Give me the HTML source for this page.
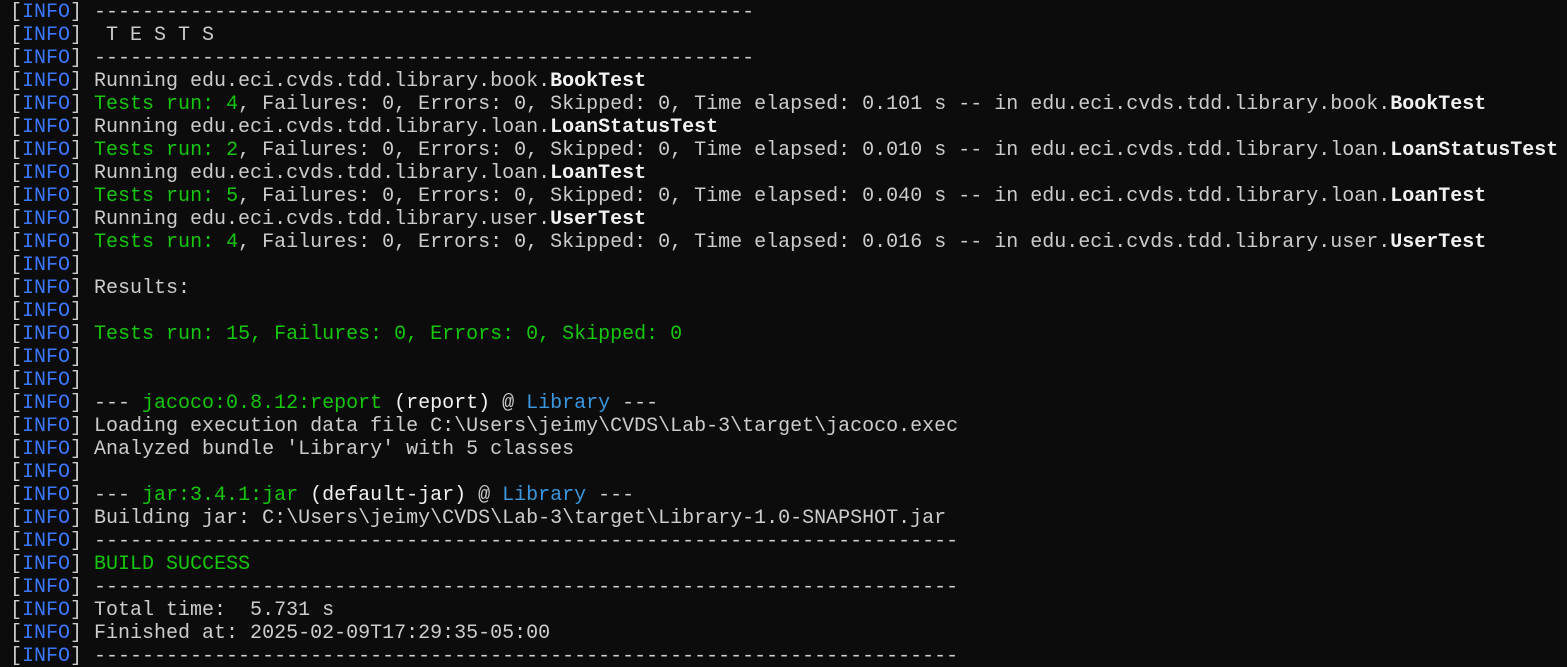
<!DOCTYPE html>
<html><head><meta charset="utf-8"><style>
html,body{margin:0;padding:0;background:#0c0c0c;width:1567px;height:667px;overflow:hidden}
pre{margin:0;padding:1px 0 0 10px;font-family:"Liberation Mono",monospace;font-size:20px;line-height:23px;color:#cccccc;white-space:pre}
.b{color:#3b78ff}.g{color:#16c60c}.w{color:#f2f2f2;font-weight:bold}.c{color:#3a96dd}
</style></head><body><pre>[<span class="b">INFO</span>] -------------------------------------------------------
[<span class="b">INFO</span>]  T E S T S
[<span class="b">INFO</span>] -------------------------------------------------------
[<span class="b">INFO</span>] Running edu.eci.cvds.tdd.library.book.<span class="w">BookTest</span>
[<span class="b">INFO</span>] <span class="g">Tests run: 4</span>, Failures: 0, Errors: 0, Skipped: 0, Time elapsed: 0.101 s -- in edu.eci.cvds.tdd.library.book.<span class="w">BookTest</span>
[<span class="b">INFO</span>] Running edu.eci.cvds.tdd.library.loan.<span class="w">LoanStatusTest</span>
[<span class="b">INFO</span>] <span class="g">Tests run: 2</span>, Failures: 0, Errors: 0, Skipped: 0, Time elapsed: 0.010 s -- in edu.eci.cvds.tdd.library.loan.<span class="w">LoanStatusTest</span>
[<span class="b">INFO</span>] Running edu.eci.cvds.tdd.library.loan.<span class="w">LoanTest</span>
[<span class="b">INFO</span>] <span class="g">Tests run: 5</span>, Failures: 0, Errors: 0, Skipped: 0, Time elapsed: 0.040 s -- in edu.eci.cvds.tdd.library.loan.<span class="w">LoanTest</span>
[<span class="b">INFO</span>] Running edu.eci.cvds.tdd.library.user.<span class="w">UserTest</span>
[<span class="b">INFO</span>] <span class="g">Tests run: 4</span>, Failures: 0, Errors: 0, Skipped: 0, Time elapsed: 0.016 s -- in edu.eci.cvds.tdd.library.user.<span class="w">UserTest</span>
[<span class="b">INFO</span>]
[<span class="b">INFO</span>] Results:
[<span class="b">INFO</span>]
[<span class="b">INFO</span>] <span class="g">Tests run: 15, Failures: 0, Errors: 0, Skipped: 0</span>
[<span class="b">INFO</span>]
[<span class="b">INFO</span>]
[<span class="b">INFO</span>] --- <span class="g">jacoco:0.8.12:report</span> <span class="w" style="font-weight:normal">(report)</span> @ <span class="c">Library</span> ---
[<span class="b">INFO</span>] Loading execution data file C:\Users\jeimy\CVDS\Lab-3\target\jacoco.exec
[<span class="b">INFO</span>] Analyzed bundle 'Library' with 5 classes
[<span class="b">INFO</span>]
[<span class="b">INFO</span>] --- <span class="g">jar:3.4.1:jar</span> <span class="w" style="font-weight:normal">(default-jar)</span> @ <span class="c">Library</span> ---
[<span class="b">INFO</span>] Building jar: C:\Users\jeimy\CVDS\Lab-3\target\Library-1.0-SNAPSHOT.jar
[<span class="b">INFO</span>] ------------------------------------------------------------------------
[<span class="b">INFO</span>] <span class="g">BUILD SUCCESS</span>
[<span class="b">INFO</span>] ------------------------------------------------------------------------
[<span class="b">INFO</span>] Total time:  5.731 s
[<span class="b">INFO</span>] Finished at: 2025-02-09T17:29:35-05:00
[<span class="b">INFO</span>] ------------------------------------------------------------------------</pre></body></html>
